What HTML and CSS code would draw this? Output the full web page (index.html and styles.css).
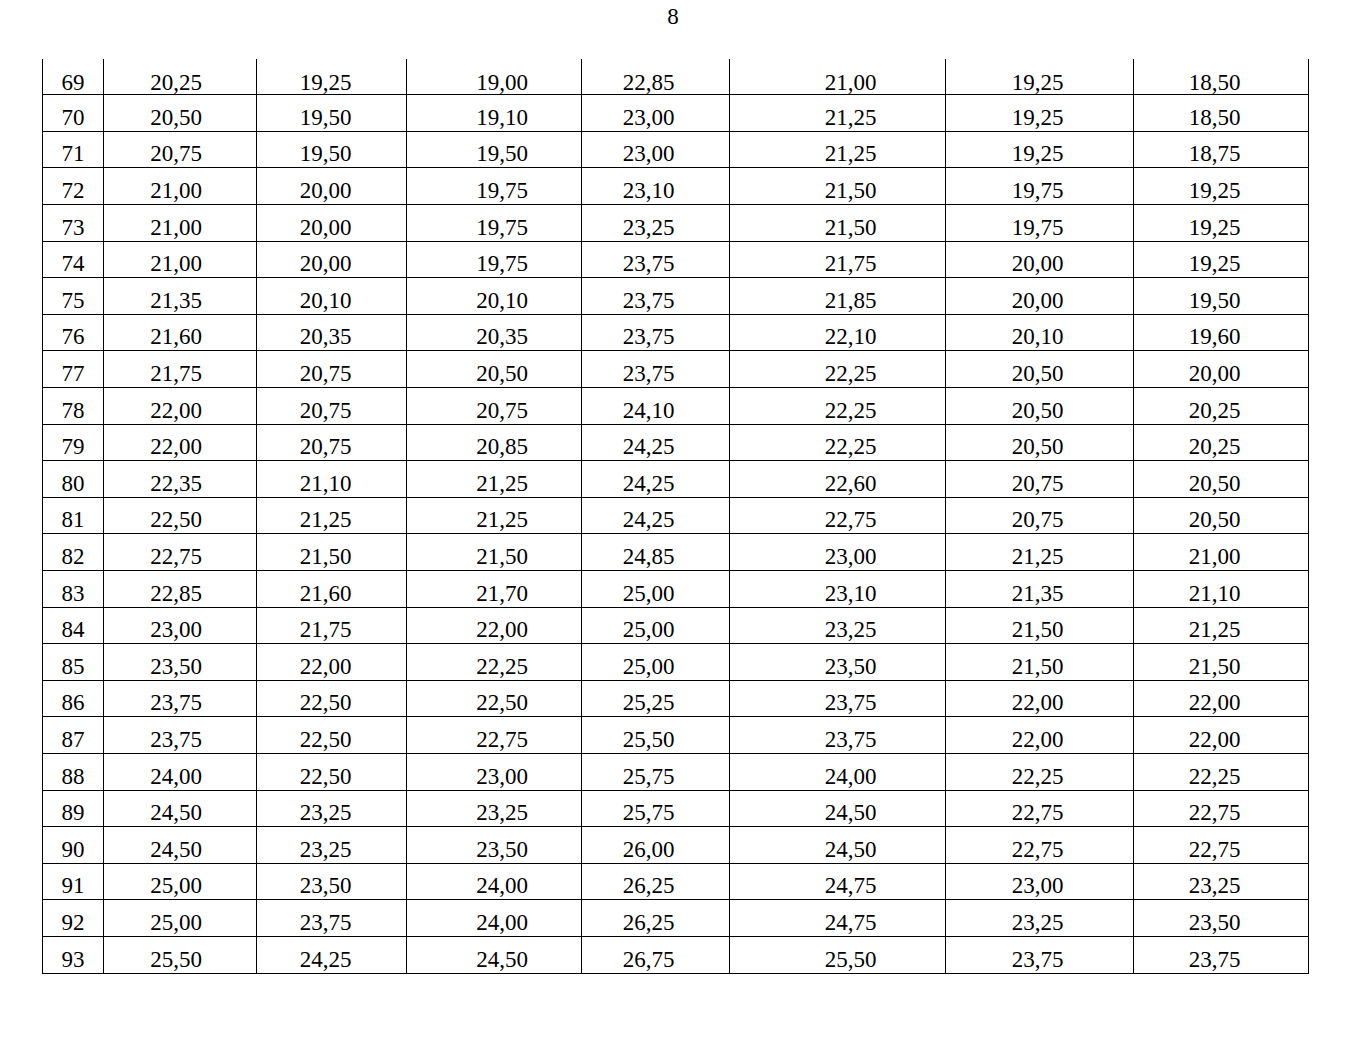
FILE: index.html
```html
<!DOCTYPE html>
<html lang="ru">
<head>
<meta charset="utf-8">
<title>8</title>
<link rel="stylesheet" href="styles.css">
</head>
<body>
<div class="page">
  <div class="pagenum">8</div>
  <table class="grid">
    <colgroup>
      <col class="w1"><col class="w2"><col class="w3"><col class="w4"><col class="w5"><col class="w6"><col class="w7"><col class="w8">
    </colgroup>
    <tbody>
      <tr class="first"><td>69</td><td>20,25</td><td>19,25</td><td>19,00</td><td>22,85</td><td>21,00</td><td>19,25</td><td>18,50</td></tr>
      <tr><td>70</td><td>20,50</td><td>19,50</td><td>19,10</td><td>23,00</td><td>21,25</td><td>19,25</td><td>18,50</td></tr>
      <tr><td>71</td><td>20,75</td><td>19,50</td><td>19,50</td><td>23,00</td><td>21,25</td><td>19,25</td><td>18,75</td></tr>
      <tr><td>72</td><td>21,00</td><td>20,00</td><td>19,75</td><td>23,10</td><td>21,50</td><td>19,75</td><td>19,25</td></tr>
      <tr><td>73</td><td>21,00</td><td>20,00</td><td>19,75</td><td>23,25</td><td>21,50</td><td>19,75</td><td>19,25</td></tr>
      <tr><td>74</td><td>21,00</td><td>20,00</td><td>19,75</td><td>23,75</td><td>21,75</td><td>20,00</td><td>19,25</td></tr>
      <tr><td>75</td><td>21,35</td><td>20,10</td><td>20,10</td><td>23,75</td><td>21,85</td><td>20,00</td><td>19,50</td></tr>
      <tr><td>76</td><td>21,60</td><td>20,35</td><td>20,35</td><td>23,75</td><td>22,10</td><td>20,10</td><td>19,60</td></tr>
      <tr><td>77</td><td>21,75</td><td>20,75</td><td>20,50</td><td>23,75</td><td>22,25</td><td>20,50</td><td>20,00</td></tr>
      <tr><td>78</td><td>22,00</td><td>20,75</td><td>20,75</td><td>24,10</td><td>22,25</td><td>20,50</td><td>20,25</td></tr>
      <tr><td>79</td><td>22,00</td><td>20,75</td><td>20,85</td><td>24,25</td><td>22,25</td><td>20,50</td><td>20,25</td></tr>
      <tr><td>80</td><td>22,35</td><td>21,10</td><td>21,25</td><td>24,25</td><td>22,60</td><td>20,75</td><td>20,50</td></tr>
      <tr><td>81</td><td>22,50</td><td>21,25</td><td>21,25</td><td>24,25</td><td>22,75</td><td>20,75</td><td>20,50</td></tr>
      <tr><td>82</td><td>22,75</td><td>21,50</td><td>21,50</td><td>24,85</td><td>23,00</td><td>21,25</td><td>21,00</td></tr>
      <tr><td>83</td><td>22,85</td><td>21,60</td><td>21,70</td><td>25,00</td><td>23,10</td><td>21,35</td><td>21,10</td></tr>
      <tr><td>84</td><td>23,00</td><td>21,75</td><td>22,00</td><td>25,00</td><td>23,25</td><td>21,50</td><td>21,25</td></tr>
      <tr><td>85</td><td>23,50</td><td>22,00</td><td>22,25</td><td>25,00</td><td>23,50</td><td>21,50</td><td>21,50</td></tr>
      <tr><td>86</td><td>23,75</td><td>22,50</td><td>22,50</td><td>25,25</td><td>23,75</td><td>22,00</td><td>22,00</td></tr>
      <tr><td>87</td><td>23,75</td><td>22,50</td><td>22,75</td><td>25,50</td><td>23,75</td><td>22,00</td><td>22,00</td></tr>
      <tr><td>88</td><td>24,00</td><td>22,50</td><td>23,00</td><td>25,75</td><td>24,00</td><td>22,25</td><td>22,25</td></tr>
      <tr><td>89</td><td>24,50</td><td>23,25</td><td>23,25</td><td>25,75</td><td>24,50</td><td>22,75</td><td>22,75</td></tr>
      <tr><td>90</td><td>24,50</td><td>23,25</td><td>23,50</td><td>26,00</td><td>24,50</td><td>22,75</td><td>22,75</td></tr>
      <tr><td>91</td><td>25,00</td><td>23,50</td><td>24,00</td><td>26,25</td><td>24,75</td><td>23,00</td><td>23,25</td></tr>
      <tr><td>92</td><td>25,00</td><td>23,75</td><td>24,00</td><td>26,25</td><td>24,75</td><td>23,25</td><td>23,50</td></tr>
      <tr><td>93</td><td>25,50</td><td>24,25</td><td>24,50</td><td>26,75</td><td>25,50</td><td>23,75</td><td>23,75</td></tr>
    </tbody>
  </table>
</div>
</body>
</html>
```

FILE: styles.css
```css
html, body {
  margin: 0;
  padding: 0;
  background: #ffffff;
}

body {
  font-family: "Liberation Serif", "Tinos", "Nimbus Roman", "DejaVu Serif", serif;
  font-size: 23px;
  color: #000000;
}

.page {
  width: 1266px;
  padding: 4px 0 0 42px;
}

.pagenum {
  text-align: center;
  line-height: 26px;
  height: 26px;
  padding-right: 4px;
  margin-bottom: 29px;
}

.grid {
  border-collapse: collapse;
  table-layout: fixed;
  width: 1266px;
}

.w1 { width: 61px; }
.w2 { width: 153px; }
.w3 { width: 150px; }
.w4 { width: 175px; }
.w5 { width: 148px; }
.w6 { width: 216px; }
.w7 { width: 188px; }
.w8 { width: 175px; }

.grid td {
  border-left: 1px solid #000;
  border-right: 1px solid #000;
  border-bottom: 1px solid #000;
  padding: 0 0 1px 0;
  height: 34.6px;
  line-height: 24px;
  vertical-align: bottom;
  text-align: center;
  white-space: nowrap;
}

.grid tr.first td {
  height: 35.3px;
  line-height: 23px;
  padding-bottom: 0;
}

/* per-column offsets of the centred figures */
.grid td:nth-child(2) { padding-right: 8px; }
.grid td:nth-child(3) { padding-right: 12px; }
.grid td:nth-child(4) { padding-left: 16px; }
.grid td:nth-child(5) { padding-right: 14px; }
.grid td:nth-child(6) { padding-left: 26px; }
.grid td:nth-child(7) { padding-right: 4px; }
.grid td:nth-child(8) { padding-right: 13px; }
```
